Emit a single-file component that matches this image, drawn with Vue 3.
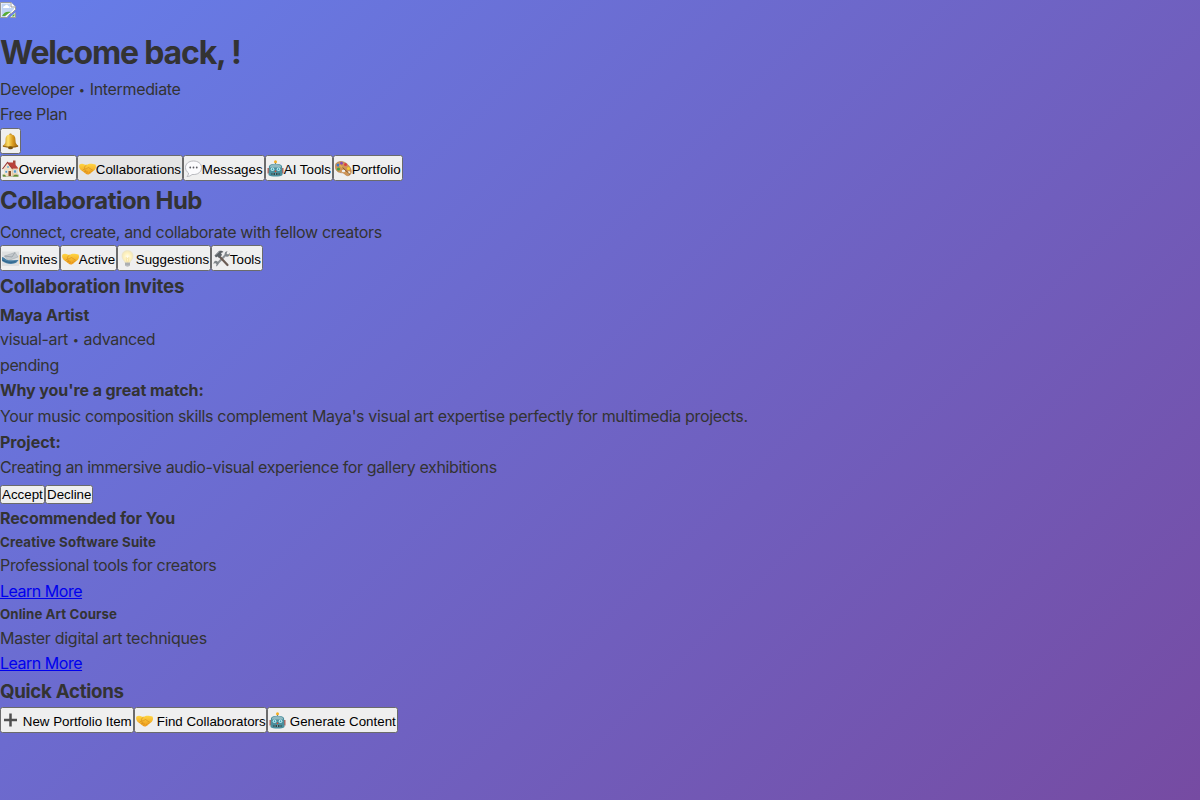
<script setup>
import { ref } from 'vue'

const tabs = [
  { icon: 'house', label: 'Overview', cls: 'w77' },
  { icon: 'hands', label: 'Collaborations', cls: 'w106' },
  { icon: 'chat', label: 'Messages', cls: 'w82' },
  { icon: 'robot', label: 'AI Tools', cls: 'w68' },
  { icon: 'palette', label: 'Portfolio', cls: 'w70' },
]
const hubTabs = [
  { icon: 'inbox', label: 'Invites', cls: 'w60' },
  { icon: 'hands', label: 'Active', cls: 'w57' },
  { icon: 'bulb', label: 'Suggestions', cls: 'w94' },
  { icon: 'tools', label: 'Tools', cls: 'w52' },
]
const actions = [
  { icon: 'plus', label: 'New Portfolio Item', cls: 'w134' },
  { icon: 'hands', label: 'Find Collaborators', cls: 'w133' },
  { icon: 'robot', label: 'Generate Content', cls: 'w131' },
]
const active = ref('Collaborations')
</script>

<template>
  <svg class="sprite" aria-hidden="true">
    <defs>
      <linearGradient id="gold" x1="0" y1="0" x2="1" y2="0">
        <stop offset="0" stop-color="#b87c12" /><stop offset=".35" stop-color="#ffe169" />
        <stop offset=".65" stop-color="#d8981c" /><stop offset="1" stop-color="#94600c" />
      </linearGradient>
      <linearGradient id="skin" x1="0" y1="0" x2="0" y2="1">
        <stop offset="0" stop-color="#ffd542" /><stop offset="1" stop-color="#ee9a1c" />
      </linearGradient>
      <radialGradient id="glow">
        <stop offset="0" stop-color="#fffdf0" /><stop offset=".6" stop-color="#fff2bd" /><stop offset="1" stop-color="#f1e6c0" />
      </radialGradient>
    </defs>
    <symbol id="bell" viewBox="0 0 34 34">
      <circle cx="17" cy="3.500" r="2.500" fill="#b27d18" />
      <path d="M17 3C8 3 7 9 7 15c0 6-2 8-6 11 1 4 31 4 32 0-4-3-6-5-6-11 0-6-1-12-10-12z" fill="url(#gold)" />
      <path d="M2 26c5 3 25 3 30 0" fill="none" stroke="#8f5c0e" stroke-width="2" />
      <ellipse cx="17" cy="29.500" rx="5" ry="3" fill="#77500c" />
    </symbol>
    <symbol id="house" viewBox="0 0 34 34">
      <path d="M1 29h32v4H1z" fill="#8d9c5c" />
      <path d="M4 17 12 7l9 10v15H4z" fill="#f2dfc3" />
      <path d="M20 16h11v16H20z" fill="#e3c8a6" />
      <path d="M22 1h5v10h-5z" fill="#a4493b" />
      <path d="M11 5h12l10 12H21z" fill="#b9413b" />
      <path d="M1 18 11 5l10 13" fill="none" stroke="#9a3530" stroke-width="2.200" />
      <path d="M13 22h5v10h-5z" fill="#8a4e2c" />
      <path d="M6 21h5v5H6zM23 20h6v6h-6z" fill="#5b9bc6" stroke="#fff" />
      <circle cx="12" cy="14" r="2" fill="#6db0d6" />
      <path d="M2 33c0-5 5-5 6 0zM22 33c1-5 10-5 11 0z" fill="#5d8e30" />
    </symbol>
    <symbol id="hands" viewBox="0 0 34 34">
      <path d="M1 9c3-2 7-2 10 0l4 1c4-3 9-3 13-2l5 1c2 5 1 9-3 12l-9 7c-3 2-6 1-8-1l-8-6C1 18-1 13 1 9z" fill="url(#skin)" />
      <path d="M15 10c-3 2-5 5-4 7 3 2 6-1 8-2l9 6M7 21l3-3 3 2-2 4 4-2 2 2-2 3" fill="none" stroke="#d08a1c" stroke-width="1.200" />
      <path d="m20 24 3 2m0-4 3 1" stroke="#d08a1c" stroke-width="1.200" />
    </symbol>
    <symbol id="chat" viewBox="0 0 34 34">
      <path d="M17 2C7 2 1 8 1 15c0 5 2 8 6 11 0 3-1 5-3 7 5 0 8-2 10-4 12 1 19-5 19-14 0-8-7-13-16-13z" fill="#fbfbfd" stroke="#b3b4ba" stroke-width="1.800" />
      <g fill="#5c5c62"><circle cx="10.500" cy="15" r="1.800" /><circle cx="17" cy="15" r="1.800" /><circle cx="23.500" cy="15" r="1.800" /></g>
    </symbol>
    <symbol id="robot" viewBox="0 0 34 34">
      <path d="M16 4h2v6h-2z" fill="#66747b" /><circle cx="17" cy="3.500" r="3" fill="#f4ae22" />
      <path d="M1 16h4v11H1zM29 16h4v11h-4z" fill="#b9655a" />
      <path d="M4 12c3-6 23-6 26 0l1 18c-4 4-24 4-28 0z" fill="#4a8f9d" />
      <path d="M6 12c4-5 18-5 22 0v3H6z" fill="#8fb9c1" />
      <circle cx="11" cy="18.500" r="3.500" fill="#c9f5fb" /><circle cx="23" cy="18.500" r="3.500" fill="#c9f5fb" />
      <circle cx="11" cy="18.500" r="1.800" fill="#3d9eb2" /><circle cx="23" cy="18.500" r="1.800" fill="#3d9eb2" />
      <path d="m17 20-2 4h4z" fill="#d84932" /><path d="M9 26h16v4H9z" fill="#24474e" />
      <path d="M12 27v2m5-2v2m5-2v2" stroke="#d8edf0" stroke-width="2" />
    </symbol>
    <symbol id="palette" viewBox="0 0 34 34">
      <path d="M3 6c7-6 19-3 26 7 5 7 5 15-1 18-5 2-7-2-10-4-4-3-8 0-13-4C0 19-1 10 3 6z" fill="#cf9455" stroke="#a87038" />
      <ellipse cx="17" cy="22" rx="3.500" ry="2.500" fill="#ededed" />
      <circle cx="7" cy="18" r="3.200" fill="#38a34a" /><circle cx="6" cy="10" r="3" fill="#3977cc" />
      <circle cx="13" cy="6.500" r="2.800" fill="#874db2" /><circle cx="21" cy="9" r="3" fill="#da3e42" />
      <circle cx="27" cy="17" r="3" fill="#f3cf2d" /><circle cx="28" cy="25" r="2.500" fill="#f3f0e5" />
      <path d="m12 12 18 17" stroke="#795024" stroke-width="1.800" /><path d="m9 10 6 5" stroke="#e1b253" stroke-width="3" />
    </symbol>
    <symbol id="inbox" viewBox="0 0 34 34">
      <path d="M0 3h34v29H0z" fill="#dfe0e1" />
      <path d="m5 12 21-7 6 9-19 7z" fill="#c3c8cc" stroke="#9da4a9" />
      <path d="m5 12 15 2 6-9" fill="none" stroke="#8d959b" stroke-width="1.300" />
      <path d="M0 14c5 0 6 5 11 6 6 2 13-1 22 0-2 3-4 6-9 7-8 2-16 0-24-5z" fill="#467da4" />
      <path d="M1 20c8 5 17 6 26 3" fill="none" stroke="#2e6288" stroke-width="2" />
    </symbol>
    <symbol id="bulb" viewBox="0 0 34 34">
      <path d="M17 1C9 1 5 7 6 14c1 6 5 7 6 12h10c1-5 5-6 6-12 1-7-3-13-11-13z" fill="url(#glow)" stroke="#ebe2c2" />
      <path d="m14 15 3 2 3-2-2 10h-2z" fill="none" stroke="#f0d68a" />
      <path d="M12 25h10v6c-2 3-8 3-10 0z" fill="#b8babc" /><path d="M12 28h10" stroke="#8a8d90" />
    </symbol>
    <symbol id="tools" viewBox="0 0 34 34">
      <path d="m8 28 19-20" stroke="#8b9195" stroke-width="4" />
      <path d="M24 11c-2-4 0-8 5-9l-2 5 3 2 4-3c0 6-4 9-8 7zM10 24c2 4 0 8-4 9l1-5-3-2-3 2c0-6 5-9 9-4z" fill="#80868a" />
      <path d="m14 14 15 16" stroke="#6b5c54" stroke-width="4.500" stroke-linecap="round" />
      <path d="m3 11 9-9c4-1 7 0 9 2l-5 2 2 4-6 6-3-3-3 2z" fill="#5c6266" />
      <path d="m5 10 8-7" stroke="#a4aaad" stroke-width="1.500" />
    </symbol>
    <symbol id="plus" viewBox="0 0 34 34">
      <path d="M14.500 3h5v10.500H30v5H19.500V29h-5V18.500H4v-5h10.500z" fill="#4f4f4f" />
    </symbol>
    <symbol id="broken" viewBox="0 0 16 16">
      <path d="M.5.500H11L15.500 5v2.500L12 11l-2 1-3 3.500H.5z" fill="#fff" stroke="#9b9b9b" />
      <path d="M1.500 1.500H10V6h4v1l-3 3-2 1-4 4H1.500z" fill="#c1d4f5" />
      <path d="M3 6c0-2 2-2 2-2 1-2 3-1 3 0 2 0 2 2 1 2z" fill="#fff" />
      <path d="M2 14c2-4 5-5 9-4l-2 1-4 3z" fill="#57ac35" />
      <path d="M11 .5V5h4.500" fill="#fff" stroke="#9b9b9b" />
      <path d="m15.500 10.500v5H10l2.500-2.500z" fill="#fff" />
      <path d="M15.500 10.500v5H10" fill="none" stroke="#9b9b9b" />
      <path d="m14.500 11.500v3h-3z" fill="#57ac35" />
    </symbol>
  </svg>

  <main class="dashboard">
    <header>
      <div class="avatar"><svg><use href="#broken" /></svg></div>
      <h1><span class="t-welcome">Welcome back, !</span></h1>
      <p><span class="t-role">Developer <span class="dot">•</span> Intermediate</span></p>
      <p><span class="t-plan">Free Plan</span></p>
      <div class="bell-row"><button class="w21"><svg class="icon"><use href="#bell" /></svg></button></div>
    </header>
    <nav class="row nav">
      <button v-for="t in tabs" :key="t.label" :class="[t.cls, { active: active === t.label }]" @click="active = t.label">
        <svg class="icon"><use :href="'#' + t.icon" /></svg><span>{{ t.label }}</span>
      </button>
    </nav>

    <section>
      <h2><span class="t-hub">Collaboration Hub</span></h2>
      <p><span class="t-connect">Connect, create, and collaborate with fellow creators</span></p>
      <div class="row hub-tabs">
        <button v-for="t in hubTabs" :key="t.label" :class="t.cls">
          <svg class="icon"><use :href="'#' + t.icon" /></svg><span>{{ t.label }}</span>
        </button>
      </div>
      <h3><span class="t-invites">Collaboration Invites</span></h3>
      <h4 class="name"><span class="t-maya">Maya Artist</span></h4>
      <p><span class="t-visual">visual-art <span class="dot">•</span> advanced</span></p>
      <p><span class="t-pending">pending</span></p>
      <p><strong class="t-why">Why you're a great match:</strong></p>
      <p><span class="t-match">Your music composition skills complement Maya's visual art expertise perfectly for multimedia projects.</span></p>
      <p class="low"><strong>Project:</strong></p>
      <p><span class="t-creating">Creating an immersive audio-visual experience for gallery exhibitions</span></p>
      <div class="row reply"><button class="w45">Accept</button><button class="w48">Decline</button></div>
    </section>

    <aside>
      <h4><span class="t-rec">Recommended for You</span></h4>
      <h5><span class="t-suite">Creative Software Suite</span></h5>
      <p><span class="t-prof">Professional tools for creators</span></p>
      <p><a href="#" class="t-learn">Learn More</a></p>
      <h5><span class="t-course">Online Art Course</span></h5>
      <p><span class="t-master">Master digital art techniques</span></p>
      <p><a href="#" class="t-learn">Learn More</a></p>
    </aside>

    <section>
      <h3><span class="t-quick">Quick Actions</span></h3>
      <div class="row">
        <button v-for="t in actions" :key="t.label" :class="['gap', t.cls]">
          <svg class="icon"><use :href="'#' + t.icon" /></svg><span>{{ t.label }}</span>
        </button>
      </div>
    </section>
  </main>
</template>

<style>
body { margin: 0; overflow: hidden; }
</style>

<style scoped>
.sprite { display: block; width: 0; height: 0; }
.dashboard {
  box-sizing: border-box; min-height: 100vh; color: #333;
  font: 16px/1.6 Inter, sans-serif;
  background: linear-gradient(135deg, #667eea 0%, #764ba2 100%);
}
h1, h2, h3, h4, h5, p { margin: 0; white-space: nowrap; }
h1 { font-size: 32px; line-height: 53.2px; margin-bottom: -2px; }
h2 { font-size: 24px; line-height: 39.8px; margin-bottom: -1.4px; }
h3 { font-size: 18.72px; }
h4 { font-size: 16px; }
h5 { font-size: 13.28px; }
a { color: #0000ee; }
.low { line-height: 27px; margin-bottom: -1.4px; }
.name { line-height: 26.2px; margin-bottom: -.6px; }
.dot { display: inline-block; font-size: 11px; line-height: 1; width: 7.3px; text-align: center; vertical-align: 1px; letter-spacing: 0; }
.t-welcome { letter-spacing: -1.17px; }
.t-role { letter-spacing: -.34px; }
.t-plan { letter-spacing: -.36px; }
.t-hub { letter-spacing: -.55px; }
.t-connect { letter-spacing: -.335px; }
.t-invites { letter-spacing: -.2px; }
.t-maya { letter-spacing: -.1px; }
.t-visual { letter-spacing: -.35px; }
.t-pending { letter-spacing: -.38px; }
.t-why { letter-spacing: -.09px; }
.t-match { letter-spacing: -.34px; }
.t-creating { letter-spacing: -.37px; }
.t-rec { letter-spacing: -.11px; }
.t-suite { letter-spacing: .14px; }
.t-prof { letter-spacing: -.33px; }
.t-learn { letter-spacing: -.48px; }
.t-course { letter-spacing: .09px; }
.t-master { letter-spacing: -.29px; }
.t-quick { letter-spacing: -.29px; }
.avatar { height: 25.6px; padding-top: 2px; box-sizing: border-box; }
.avatar svg { display: block; width: 16px; height: 16px; }
.bell-row { height: 27px; display: flex; }
.row { display: flex; height: 25.6px; }
.nav { height: 26.4px; }
.hub-tabs { height: 26.2px; }
button {
  box-sizing: border-box; height: 26px; flex: none; margin: 0; padding: 0 1px;
  display: flex; align-items: center; justify-content: flex-start;
  border: 1px solid #6b6b6b; border-radius: 2.5px; background: #efefef; color: #000;
  font: 13.333px/15px "Liberation Sans", Arial, sans-serif; white-space: nowrap;
}
button span { padding-top: 3px; }
.active { background: #e5e5e5; }
.icon { width: 17px; height: 17px; flex: none; margin: 1px -.2px 0 0; }
.gap span { padding-left: 4px; }
.reply { padding-top: 4.1px; box-sizing: border-box; }
.reply button { height: 19px; }
.w21 { width: 21px; } .w77 { width: 77px; } .w106 { width: 106px; } .w82 { width: 82px; }
.w68 { width: 68px; } .w70 { width: 70px; } .w60 { width: 60px; } .w57 { width: 57px; }
.w94 { width: 94px; } .w52 { width: 52px; } .w134 { width: 134px; } .w133 { width: 133px; }
.w131 { width: 131px; } .w45 { width: 45px; } .w48 { width: 48px; }
</style>
